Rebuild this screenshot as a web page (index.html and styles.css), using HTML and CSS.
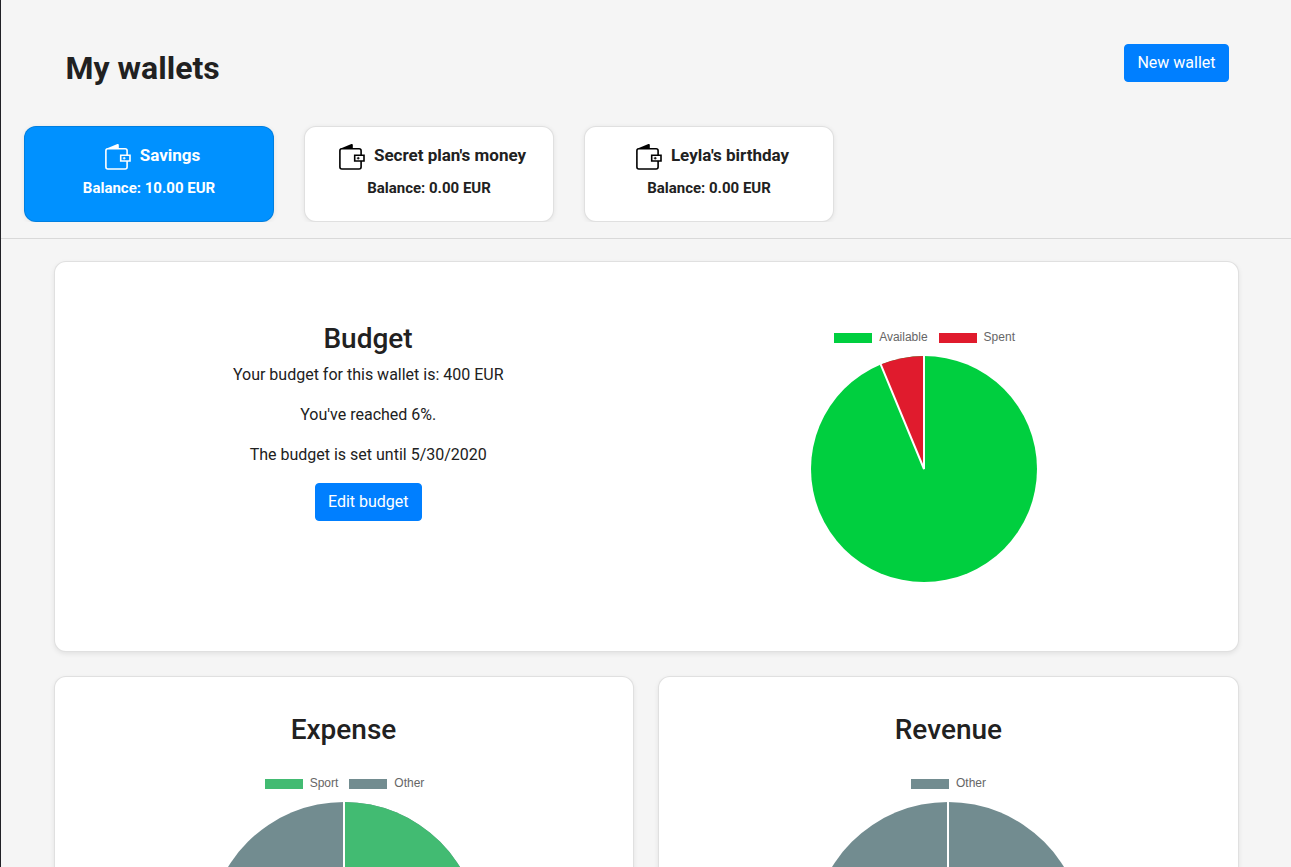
FILE: index.html
```html
<!DOCTYPE html>
<html lang="en">
<head>
<meta charset="utf-8">
<title>My wallets</title>
<link rel="stylesheet" href="styles.css">
</head>
<body>
<svg class="defs" width="0" height="0" aria-hidden="true">
  <symbol id="wallet" viewBox="0 0 28 28">
    <path d="M2 5.8 13.4 1.1Q14.8.7 14.8 2V5.8Z" fill="currentColor"/>
    <path d="M23.1 11.5V7.8a2 2 0 0 0-2-2H3.9a2 2 0 0 0-2 2V24a2 2 0 0 0 2 2h17.2a2 2 0 0 0 2-2V18M16.7 12.3h9.3v5.7H16.7Z" fill="none" stroke="currentColor" stroke-width="1.6"/>
    <path d="M18.8 15.2h2.8M20.2 13.9v2.6" stroke="currentColor" stroke-width="1"/>
  </symbol>
</svg>
<div class="page">
  <header class="header">
    <h1 class="title">My wallets</h1>
    <button class="btn btn-new">New wallet</button>
  </header>
  <nav class="wallets">
    <div class="wallet wallet-active">
      <div class="wallet-name"><svg class="wallet-icon"><use href="#wallet"/></svg><span>Savings</span></div>
      <div class="wallet-balance">Balance: 10.00 EUR</div>
    </div>
    <div class="wallet">
      <div class="wallet-name"><svg class="wallet-icon"><use href="#wallet"/></svg><span>Secret plan's money</span></div>
      <div class="wallet-balance">Balance: 0.00 EUR</div>
    </div>
    <div class="wallet">
      <div class="wallet-name"><svg class="wallet-icon"><use href="#wallet"/></svg><span>Leyla's birthday</span></div>
      <div class="wallet-balance">Balance: 0.00 EUR</div>
    </div>
  </nav>
  <main class="content">
    <section class="card budget">
      <div class="budget-info">
        <h2 class="heading">Budget</h2>
        <p class="text">Your budget for this wallet is: 400 EUR</p>
        <p class="text">You've reached 6%.</p>
        <p class="text">The budget is set until 5/30/2020</p>
        <button class="btn">Edit budget</button>
      </div>
      <div class="chart budget-chart">
        <div class="legend">
          <span class="key"><i class="swatch available"></i>Available</span>
          <span class="key"><i class="swatch spent"></i>Spent</span>
        </div>
        <svg class="pie" width="228" height="228" viewBox="-114 -114 228 228">
          <circle r="113" class="fill-available"/>
          <path d="M0 0-43.24-104.4A113 113 0 0 1 0-113Z" class="fill-spent"/>
          <path d="M-43.6-105.3 0 0V-114" class="divider"/>
        </svg>
      </div>
    </section>
    <div class="row">
      <section class="card summary expense">
        <h2 class="heading">Expense</h2>
        <div class="chart">
          <div class="legend">
            <span class="key"><i class="swatch sport"></i>Sport</span>
            <span class="key"><i class="swatch other"></i>Other</span>
          </div>
          <svg class="pie" width="274" height="274" viewBox="-137 -137 274 274">
            <circle r="136" class="fill-other"/>
            <path d="M0 0V-136A136 136 0 0 1 0 136Z" class="fill-sport"/>
            <path d="M0-137V137" class="divider"/>
          </svg>
        </div>
      </section>
      <section class="card summary revenue">
        <h2 class="heading">Revenue</h2>
        <div class="chart">
          <div class="legend">
            <span class="key"><i class="swatch other"></i>Other</span>
          </div>
          <svg class="pie" width="274" height="274" viewBox="-137 -137 274 274">
            <circle r="136" class="fill-other"/>
            <path d="M0-137V0" class="divider"/>
          </svg>
        </div>
      </section>
    </div>
  </main>
</div>
</body>
</html>
```
FILE: styles.css
```css
* { box-sizing: border-box; }
body {
  margin: 0;
  height: 867px;
  overflow: hidden;
  background: #f5f5f5;
  color: #212121;
  font: 16px/24px Roboto, sans-serif;
}
.defs { display: block; }
.page { height: 867px; overflow: hidden; border-left: 1px solid #212126; }
.header {
  display: flex;
  justify-content: space-between;
  align-items: flex-start;
  height: 116px;
  padding: 44px 62px 0 64.5px;
}
.title { margin: 4px 0 0; font-size: 32px; line-height: 40px; font-weight: 700; }
.btn {
  height: 38px;
  padding: 6px 12px;
  border: 1px solid #007fff;
  border-radius: 4px;
  background: #007fff;
  color: #fff;
  font: 16px/24px Roboto, sans-serif;
}
.btn-new { width: 105px; }
.wallets {
  display: flex;
  gap: 30px;
  height: 106px;
  padding: 10px 23px 0;
  overflow: hidden;
}
.wallet {
  width: 250px;
  height: 96px;
  padding: 16px 0 0;
  border: 1px solid rgba(0, 0, 0, .12);
  border-radius: 12px;
  background: #fff;
  box-shadow: 0 1px 5px rgba(0, 0, 0, .08);
  text-align: center;
  font-weight: 700;
}
.wallet-active { background: #0091ff; color: #fff; }
.wallet:not(.wallet-active) .wallet-icon { color: #000; }
.wallet-name {
  display: flex;
  justify-content: center;
  gap: 8px;
  height: 34px;
  padding-left: 6px;
  font-size: 17px;
  line-height: 24px;
}
.wallet-icon { width: 28px; height: 28px; }
.wallet-balance { font-size: 15px; line-height: 22px; }
.content {
  display: grid;
  gap: 24px;
  margin-top: 16px;
  padding: 22px 52px 0 53px;
  border-top: 1px solid #d9d9d9;
}
.card {
  border: 1px solid rgba(0, 0, 0, .12);
  border-radius: 12px;
  background: #fff;
  box-shadow: 0 2px 5px rgba(0, 0, 0, .08);
}
.budget { display: grid; grid-template-columns: 1fr 1fr; height: 391px; padding: 0 35px; }
.budget-info { padding-top: 60px; text-align: center; }
.heading { margin: 0; font-size: 28px; line-height: 34px; font-weight: 500; text-align: center; }
.budget-info .heading { margin-bottom: 7px; padding-right: .5px; }
.text { margin: 0 0 16px; }
.chart { display: flex; flex-direction: column; align-items: center; }
.budget-chart { padding: 68px 1px 0 0; }
.legend {
  display: flex;
  gap: 11px;
  height: 14px;
  color: #666;
  font: 12px/14px "Liberation Sans", Arial, sans-serif;
}
.budget-chart .legend { padding-left: .6px; }
.key { display: flex; gap: 7px; }
.swatch { width: 38px; height: 10px; margin-top: 3px; }
.available { background: #00cf3f; }
.spent { background: #e01b2d; }
.sport { background: #42bb72; }
.other { background: #728c90; }
.pie { display: block; margin-top: 11px; flex: none; }
.fill-available { fill: #00cf3f; }
.fill-spent { fill: #e01b2d; }
.fill-sport { fill: #42bb72; }
.fill-other { fill: #728c90; }
.divider { fill: none; stroke: #fff; stroke-width: 2; }
.row { display: grid; grid-template-columns: 580px 581px; gap: 24px; }
.summary { height: 420px; padding-top: 36px; }
.summary .chart { padding-top: 29px; }
.expense .heading { padding-right: 1px; }
.expense .legend { padding-left: 1px; }
.revenue { padding-right: 1px; }
.revenue .heading { padding-left: .8px; }
.revenue .legend { padding-left: 1px; }
```
